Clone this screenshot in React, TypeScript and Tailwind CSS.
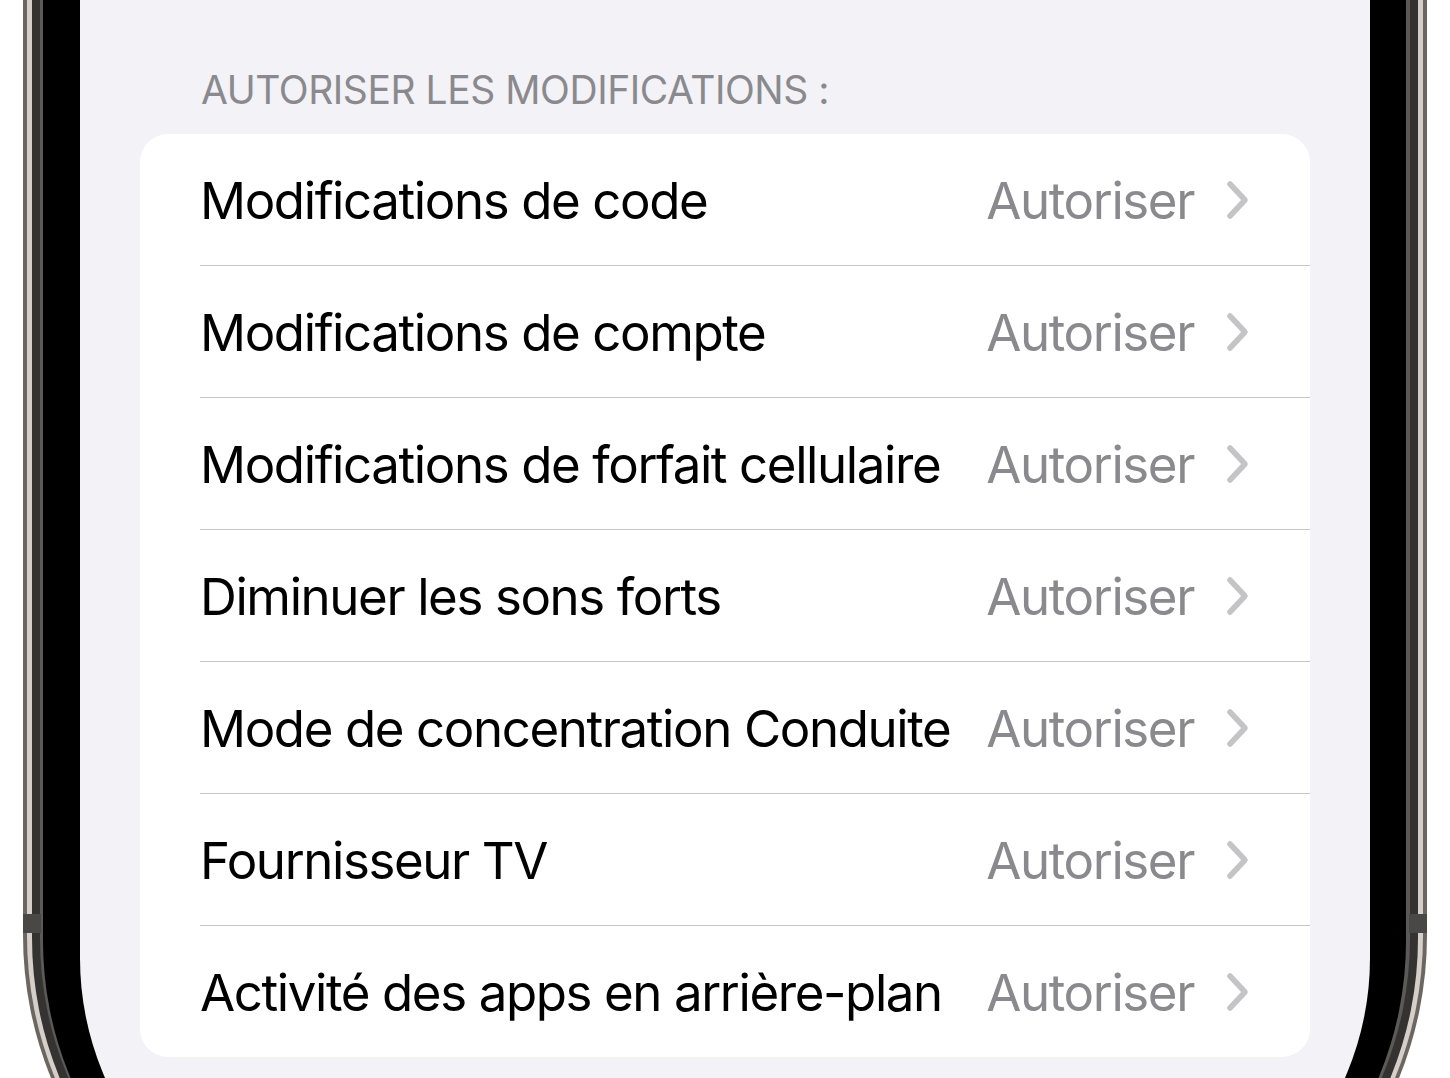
import React from "react";

const rows = [
  "Modifications de code",
  "Modifications de compte",
  "Modifications de forfait cellulaire",
  "Diminuer les sons forts",
  "Mode de concentration Conduite",
  "Fournisseur TV",
  "Activité des apps en arrière-plan",
];

function Chevron() {
  return (
    <svg width="24" height="40" viewBox="0 0 24 40" className="block">
      <path
        d="M4 4 L19 20 L4 36"
        fill="none"
        stroke="#c4c4c7"
        strokeWidth="5.5"
        strokeLinecap="round"
        strokeLinejoin="round"
      />
    </svg>
  );
}

export default function App() {
  return (
    <div
      className="w-[1450px] h-[1078px] overflow-hidden bg-white"
      style={{ fontFamily: "Inter, 'Noto Sans', sans-serif" }}
    >
      <div className="relative ml-[23px] w-[1404px] h-[1315px] bg-[#6b6660] pl-[4px] pr-[4px] pb-[4px] rounded-b-[380px]">
        <div className="absolute left-0 top-[914px] w-[18px] h-[19px] bg-[#4a4846]" />
        <div className="absolute right-0 top-[914px] w-[18px] h-[19px] bg-[#4a4846]" />
        <div className="h-full bg-[#d6cec8] pl-[5px] pr-[5px] pb-[5px] rounded-b-[375px]">
          <div className="h-full bg-[#353331] pl-[8px] pr-[8px] pb-[8px] rounded-b-[368px]">
            <div className="h-full bg-[#5c5a57] pl-[3px] pr-[4px] pb-[3px] rounded-b-[360px]">
              <div className="h-full bg-black pl-[37px] pr-[36px] pb-[37px] rounded-b-[354px]">
                <div className="h-full bg-[#f2f2f7] rounded-b-[300px] overflow-hidden">
                  <div className="pt-[66px] pl-[121px] text-[39px] leading-[47px] text-[#8a8a8e] tracking-[-0.45px]">
                    AUTORISER LES MODIFICATIONS :
                  </div>
                  <div className="mt-[21px] mx-[60px] bg-white rounded-[28px] overflow-hidden">
                    {rows.map((r, i) => (
                      <div key={r}>
                        <div className="h-[131px] flex items-center pl-[60px] pr-[60px]">
                          <div className="flex-1 text-[51px] leading-[60px] pt-[2px] text-black tracking-[-1.4px] whitespace-nowrap">
                            {r}
                          </div>
                          <div className="text-[51px] leading-[60px] pt-[2px] text-[#8a8a8e] tracking-[-1.4px] mr-[32px]">
                            Autoriser
                          </div>
                          <Chevron />
                        </div>
                        {i < rows.length - 1 && (
                          <div className="ml-[60px] h-px bg-[#c6c6c8]" />
                        )}
                      </div>
                    ))}
                  </div>
                </div>
              </div>
            </div>
          </div>
        </div>
      </div>
    </div>
  );
}
